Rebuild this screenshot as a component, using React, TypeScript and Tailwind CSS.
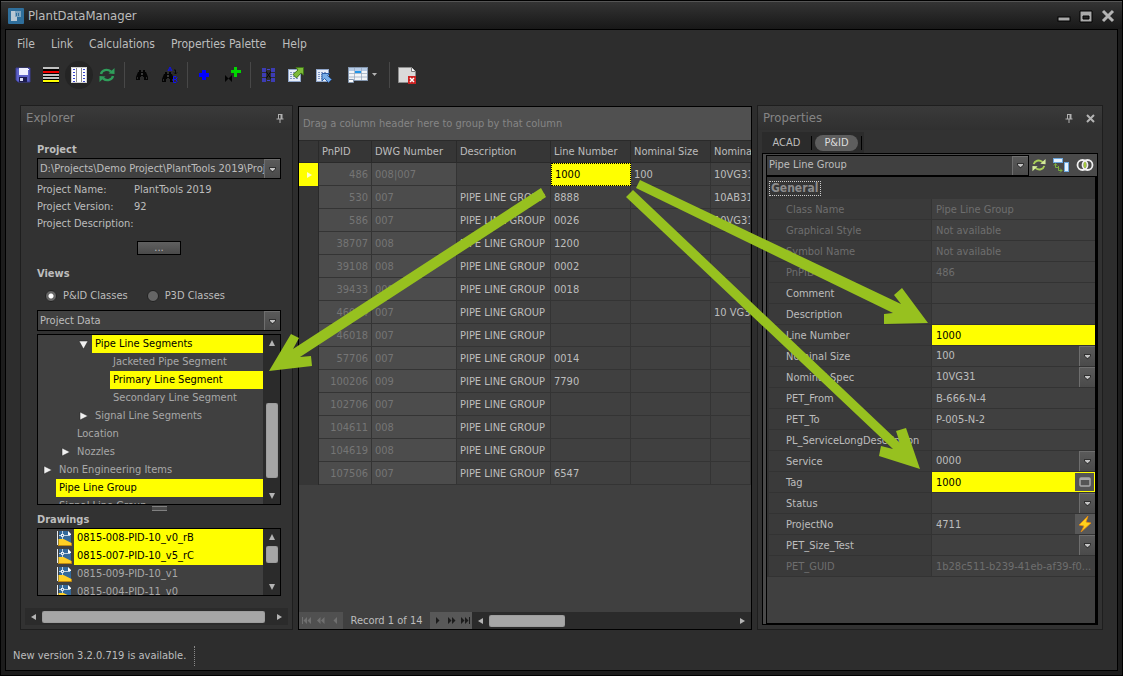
import { useState } from "react";
import type { ReactNode } from "react";

const treeItems = [
    { label: "Pipe Line Segments", level: 2, arrow: "open", selected: true },
    { label: "Jacketed Pipe Segment", level: 3 },
    { label: "Primary Line Segment", level: 3, selected: true },
    { label: "Secondary Line Segment", level: 3 },
    { label: "Signal Line Segments", level: 2, arrow: "closed" },
    { label: "Location", level: 1 },
    { label: "Nozzles", level: 1, arrow: "closed" },
    { label: "Non Engineering Items", level: 0, arrow: "closed" },
    { label: "Pipe Line Group", level: 0, selected: true },
    { label: "Signal Line Group", level: 0 },
];

const drawings = [
    { name: "0815-008-PID-10_v0_rB", selected: true },
    { name: "0815-007-PID-10_v5_rC", selected: true },
    { name: "0815-009-PID-10_v1" },
    { name: "0815-004-PID-11_v0" },
];

const levelPadding = ["pl-0", "pl-[18px]", "pl-[36px]", "pl-[54px]"];

// id, drawing, description, line number, nominal size, nominal spec
const records = [
    ["486", "008|007", "", "1000", "100", "10VG31"],
    ["530", "007", "PIPE LINE GROUP", "8888", "", "10AB31"],
    ["586", "007", "PIPE LINE GROUP", "0026", "", "10VG31"],
    ["38707", "008", "PIPE LINE GROUP", "1200", "", ""],
    ["39108", "008", "PIPE LINE GROUP", "0002", "", ""],
    ["39433", "008", "PIPE LINE GROUP", "0018", "", ""],
    ["46004", "007", "PIPE LINE GROUP", "", "", "10 VG31"],
    ["46018", "007", "PIPE LINE GROUP", "", "", ""],
    ["57706", "007", "PIPE LINE GROUP", "0014", "", ""],
    ["100206", "009", "PIPE LINE GROUP", "7790", "", ""],
    ["102706", "007", "PIPE LINE GROUP", "", "", ""],
    ["104611", "008", "PIPE LINE GROUP", "", "", ""],
    ["104619", "008", "PIPE LINE GROUP", "", "", ""],
    ["107506", "007", "PIPE LINE GROUP", "6547", "", ""],
];

type Property = {
    name: string;
    value: string;
    kind?: "readonly" | "select" | "window" | "bolt";
    marked?: boolean;
};

const properties: Property[] = [
    { name: "Class Name", value: "Pipe Line Group", kind: "readonly" },
    { name: "Graphical Style", value: "Not available", kind: "readonly" },
    { name: "Symbol Name", value: "Not available", kind: "readonly" },
    { name: "PnPID", value: "486", kind: "readonly" },
    { name: "Comment", value: "" },
    { name: "Description", value: "" },
    { name: "Line Number", value: "1000", marked: true },
    { name: "Nominal Size", value: "100", kind: "select" },
    { name: "Nominal Spec", value: "10VG31", kind: "select" },
    { name: "PET_From", value: "B-666-N-4" },
    { name: "PET_To", value: "P-005-N-2" },
    { name: "PL_ServiceLongDescription", value: "" },
    { name: "Service", value: "0000", kind: "select" },
    { name: "Tag", value: "1000", kind: "window", marked: true },
    { name: "Status", value: "", kind: "select" },
    { name: "ProjectNo", value: "4711", kind: "bolt" },
    { name: "PET_Size_Test", value: "", kind: "select" },
    { name: "PET_GUID", value: "1b28c511-b239-41eb-af39-f0...", kind: "readonly" },
];

function Icon({ w = 16, h = 16, children }: { w?: number; h?: number; children: ReactNode }) {
    return (
        <svg width={w} height={h} viewBox={`0 0 ${w} ${h}`} className="shrink-0" aria-hidden="true">
            {children}
        </svg>
    );
}

function Triangle({ dir, color = "#b4b4b4" }: { dir: "up" | "down" | "left" | "right"; color?: string }) {
    const points = {
        up: "1,7 4,1 7,7",
        down: "1,1 7,1 4,7",
        left: "6,1 6,7 1,4",
        right: "2,1 2,7 7,4",
    };
    return (
        <Icon w={8} h={8}>
            <polygon points={points[dir]} fill={color} />
        </Icon>
    );
}

function TreeArrow({ open }: { open: boolean }) {
    return (
        <Icon w={12} h={12}>
            <polygon
                points={open ? "2,3 11,3 6.5,11" : "3,2 11,6 3,10"}
                fill="#f0f0f0"
                stroke="#1e1e1e"
                strokeWidth="0.5"
            />
        </Icon>
    );
}

function PinIcon() {
    return (
        <Icon w={9} h={10}>
            <path d="M2.5 1v5M2 1.5h4M0.5 6h7M4 6v4" stroke="#b0b0b0" fill="none" />
            <path d="M5.5 1v5" stroke="#b0b0b0" strokeWidth="2" />
        </Icon>
    );
}

function DropMark() {
    return (
        <span className="pointer-events-none flex w-4 shrink-0 items-center justify-center border-l border-t border-[#6e6e6e] bg-linear-to-b from-[#5a5a5a] to-[#4a4a4a]">
            <svg width="9" height="7" viewBox="0 0 9 7" aria-hidden="true">
                <path d="M1 1h7v2L4.500 6.500 1 3z" fill="#303030" />
                <path d="M2 2h5v1L4.500 5.200 2 3z" fill="#c4c4c4" />
            </svg>
        </span>
    );
}

function ComboBox({ label, value, className = "" }: { label: string; value: string; className?: string }) {
    return (
        <div className={`flex h-[21px] border border-black bg-[#404040] ${className}`}>
            <select
                aria-label={label}
                className="min-w-0 flex-1 appearance-none overflow-hidden bg-transparent pl-0.5 text-[#bdbdbd] outline-none"
            >
                <option>{value}</option>
            </select>
            <DropMark />
        </div>
    );
}

function VerticalScroll({ thumb }: { thumb: string }) {
    return (
        <div className="relative flex w-[17px] shrink-0 flex-col items-center justify-between bg-[#2b2b2b] py-1">
            <Triangle dir="up" />
            <div className={`absolute w-3 rounded-xs bg-[#a6a6a6] shadow-[inset_0_0_1px_#555] ${thumb}`} />
            <Triangle dir="down" />
        </div>
    );
}

function ToolButton({ label, wide, active, children }: { label: string; wide?: boolean; active?: boolean; children: ReactNode }) {
    return (
        <button
            aria-label={label}
            title={label}
            className={`flex h-7 items-center justify-center gap-1 rounded-full hover:bg-[#242424] ${wide ? "w-12" : "w-7"} ${active ? "bg-[#242424]" : ""}`}
        >
            {children}
        </button>
    );
}

function Separator() {
    return <div className="mx-[3px] h-[26px] w-px bg-[#484848]" />;
}

function Binoculars() {
    return (
        <g fill="#040404">
            <path d="M4 3h2v2h2V3h2v2h1l2 5v3H9v-3H8V9H6v1H5v3H1v-3l2-5h1z" />
            <path d="M6.500 6.500h1v1h-1z" fill="#dddddd" />
            <path d="M2.500 10v2M11.500 10v2" stroke="#3c3c3c" strokeWidth="0.7" />
        </g>
    );
}

function SheetIcon() {
    return (
        <g>
            <rect x="0.5" y="2.500" width="12" height="12" fill="#e6edf8" stroke="#8ea4c8" />
            <path d="M2 5.500h9M2 7.500h9M2 9.500h9M2 11.500h9" stroke="#7f97c4" strokeDasharray="2 1" />
        </g>
    );
}

function Toolbar() {
    return (
        <div className="flex h-[34px] items-center pl-[3px]">
            <ToolButton label="Save">
                <Icon>
                    <path d="M1 1h14v14H3l-2-2z" fill="#5d62c8" stroke="#3c3f96" />
                    <rect x="4" y="1" width="9" height="7" fill="#eef0ff" />
                    <rect x="4" y="10" width="8" height="5" fill="#1c1c50" />
                    <rect x="5" y="11" width="3" height="3" fill="#d8daf2" />
                    <path d="M13.500 2v1" stroke="#fff" />
                </Icon>
            </ToolButton>
            <ToolButton label="Rows">
                <Icon>
                    <rect width="16" height="16" fill="#000" />
                    <path d="M0 1h16M0 8h16M0 11h16" stroke="#c0c0c0" strokeWidth="2" />
                    <path d="M0 5h16" stroke="#f00000" strokeWidth="2" />
                    <path d="M0 14h16" stroke="#ffff00" strokeWidth="2" />
                </Icon>
            </ToolButton>
            <ToolButton label="Columns" active>
                <Icon>
                    <rect x="0.5" y="0.5" width="15" height="15" fill="#fff" stroke="#d0d0d0" />
                    <path d="M5.500 1v14M10.500 1v14" stroke="#8c8c8c" />
                    <path d="M3 2v13M13 2v13" stroke="#3b46d0" strokeWidth="2" strokeDasharray="1 2" />
                </Icon>
            </ToolButton>
            <ToolButton label="Refresh">
                <Icon>
                    <path d="M2 7C3 3 8 1.500 12 4.500M14 9C13 13 8 14.500 4 11.500" fill="none" stroke="#2f9e5a" strokeWidth="2.400" />
                    <path d="M15.500 1v6l-6-.5zM.5 15V9l6 .5z" fill="#2f9e5a" />
                </Icon>
            </ToolButton>
            <Separator />
            <ToolButton label="Find">
                <Icon w={14}>
                    <Binoculars />
                </Icon>
            </ToolButton>
            <ToolButton label="Replace">
                <Icon w={18} h={18}>
                    <g transform="translate(0 3)">
                        <Binoculars />
                    </g>
                    <path d="M7 5l2-4 2 4M8 4h2" stroke="#1010f0" fill="none" />
                    <path d="M13 4h1.500v4M13 6.500l1.500 1.500L16 6.500" stroke="#080808" fill="none" />
                    <path d="M12.500 10.500h2.500l1 1-1 2h-2.500h2.500l1 2-1 1h-2.500z" stroke="#1010f0" fill="none" />
                </Icon>
            </ToolButton>
            <Separator />
            <ToolButton label="Add">
                <Icon>
                    <path d="M5 3h4v3h3v4H9v3H5v-3H2V6h3z" fill="#0000ff" />
                </Icon>
            </ToolButton>
            <ToolButton label="Add valve">
                <Icon>
                    <path d="M0 8l7 7V8l-7 7z" fill="#040404" />
                    <path d="M9 0h3v3h4v3h-4v4H9V6H6V3h3z" fill="#00d800" />
                </Icon>
            </ToolButton>
            <Separator />
            <ToolButton label="Matrix">
                <Icon w={13} h={14}>
                    <path d="M3 2l7 10M10 2L3 12" stroke="#080808" />
                    <path d="M0 0h4v4H0zM0 5h4v4H0zM0 10h4v4H0zM9 0h4v4H9zM9 5h4v4H9zM9 10h4v4H9z" fill="#3c3cb4" />
                    <path d="M5 1h3v1H5zM5 12h3v1H5z" fill="#4646c8" />
                </Icon>
            </ToolButton>
            <ToolButton label="Export">
                <Icon>
                    <SheetIcon />
                    <path d="M8 0.500h7.500V8l-2.500-2-4.500 5L5 7.500 10 3z" fill="#7dbb3a" stroke="#3f7418" />
                </Icon>
            </ToolButton>
            <ToolButton label="Import">
                <Icon>
                    <SheetIcon />
                    <path d="M6 6.500h7.500l-2 2 4 4-3 3-4-4-2.500 2.500z" fill="#78aee8" stroke="#2c5ea6" />
                </Icon>
            </ToolButton>
            <ToolButton label="Layout" wide>
                <Icon w={20}>
                    <rect x="0.5" y="0.5" width="19" height="13" fill="#f2f5f8" stroke="#8396ae" />
                    <path d="M1 2.500h18" stroke="#b6cbe6" strokeWidth="3" />
                    <path d="M6.500 1v12M13.500 1v12M1 6.500h18M1 10h18" stroke="#93a5ba" strokeWidth="0.7" />
                    <path d="M7 5h6" stroke="#2196e8" strokeWidth="2" />
                    <path d="M0.500 12.500h5v3h-5z" fill="#fff" stroke="#8396ae" />
                </Icon>
                <Icon w={5} h={4}>
                    <path d="M0 0h5L2.500 3z" fill="#b4b4b4" />
                </Icon>
            </ToolButton>
            <Separator />
            <ToolButton label="Close document">
                <Icon w={18} h={17}>
                    <path d="M0.500 0.500h13l4 4v11h-17z" fill="#dadada" stroke="#8c8c8c" />
                    <path d="M13.500 0.500v4h4" fill="#fff" stroke="#777" />
                    <rect x="10" y="9" width="8" height="8" fill="#cc2222" />
                    <path d="M12 11l4 4M16 11l-4 4" stroke="#fff" strokeWidth="1.500" />
                </Icon>
            </ToolButton>
        </div>
    );
}

function DrawingIcon() {
    return (
        <Icon w={16}>
            <path d="M0.500 1v14" stroke="#e8eef4" />
            <path d="M2 1h9l3 3v11H2z" fill="#34699a" />
            <path d="M11 1l3 3v1h-3z" fill="#ffffff" />
            <path d="M2 5.500h11M5.500 1v8" stroke="#e4edf5" strokeWidth="0.8" />
            <rect x="4.500" y="4.500" width="2" height="2" fill="#34699a" stroke="#ffffff" strokeWidth="0.8" />
            <path d="M1.500 9h5l8 4v2.500h-13z" fill="#ffcf24" />
            <path d="M1 15.500h13.500V13" stroke="#c08a10" fill="none" />
        </Icon>
    );
}

function PanelHeader({ title, children }: { title: string; children: ReactNode }) {
    return (
        <div className="flex h-6 shrink-0 items-center gap-3 bg-linear-to-b from-[#3a3a3a] to-[#303030] pl-[5px] pr-[7px]">
            <h2 className="flex-1 text-[13px] text-[#858585]">{title}</h2>
            {children}
        </div>
    );
}

function Explorer() {
    const [view, setView] = useState("pid");
    const info = [
        ["Project Name:", "PlantTools 2019"],
        ["Project Version:", "92"],
        ["Project Description:", ""],
    ];

    return (
        <section className="flex w-[273px] shrink-0 flex-col border border-[#1e1e1e] bg-[#323232]">
            <PanelHeader title="Explorer">
                <button aria-label="Pin explorer">
                    <PinIcon />
                </button>
            </PanelHeader>

            <div className="flex min-h-0 flex-1 flex-col pl-4 pr-[11px] pt-3">
                <h3 className="font-bold leading-4">Project</h3>
                <ComboBox label="Project" value="D:\Projects\Demo Project\PlantTools 2019\Project.xml" />
                <dl className="mt-0.5">
                    {info.map(([name, value]) => (
                        <div key={name} className="flex leading-[17px]">
                            <dt className="w-[97px] whitespace-nowrap">{name}</dt>
                            <dd>{value}</dd>
                        </div>
                    ))}
                </dl>
                <button className="mt-[9px] h-[14px] w-11 self-center border border-black bg-linear-to-b from-[#606060] to-[#4a4a4a] leading-[10px]">
                    ...
                </button>

                <h3 className="mt-[11px] font-bold leading-4">Views</h3>
                <div className="flex h-7 items-center gap-[19px] pl-2">
                    {[["pid", "P&ID Classes"], ["p3d", "P3D Classes"]].map(([id, text]) => (
                        <label key={id} className="flex items-center gap-1.5">
                            <input
                                type="radio"
                                name="view"
                                checked={view === id}
                                onChange={() => setView(id)}
                                className="h-3 w-3 appearance-none rounded-full border border-[#222222] bg-[#666666] checked:bg-[radial-gradient(circle,#ffffff_0_2px,#666666_3px)]"
                            />
                            {text}
                        </label>
                    ))}
                </div>
                <ComboBox label="View data" value="Project Data" />

                <div className="mt-[3px] flex min-h-0 flex-1 basis-0 border border-black bg-[#404040]">
                    <ul className="flex-1 overflow-hidden">
                        {treeItems.map((item) => (
                            <li key={item.label} className={`flex h-[18px] items-center ${levelPadding[item.level]}`}>
                                <span className="flex w-[18px] shrink-0 justify-center">
                                    {item.arrow && <TreeArrow open={item.arrow === "open"} />}
                                </span>
                                <span
                                    className={`flex-1 whitespace-nowrap pl-[3px] leading-[18px] ${item.selected ? "bg-[#ffff00] text-black" : "text-[#a8a8a8]"}`}
                                >
                                    {item.label}
                                </span>
                            </li>
                        ))}
                    </ul>
                    <VerticalScroll thumb="top-[68px] h-[75px]" />
                </div>
                <div className="flex h-[7px] items-center justify-center">
                    <div className="h-[5px] w-[15px] border-y border-[#808080] bg-[#4c4c4c]" />
                </div>

                <h3 className="font-bold leading-4">Drawings</h3>
                <div className="flex h-[68px] shrink-0 border border-black bg-[#404040]">
                    <ul className="flex-1 overflow-hidden">
                        {drawings.map((drawing) => (
                            <li key={drawing.name} className="flex h-[18px] items-center gap-px pl-[19px]">
                                <DrawingIcon />
                                <span
                                    className={`flex-1 whitespace-nowrap pl-[3px] leading-[18px] ${drawing.selected ? "bg-[#ffff00] text-black" : "text-[#a8a8a8]"}`}
                                >
                                    {drawing.name}
                                </span>
                            </li>
                        ))}
                    </ul>
                    <VerticalScroll thumb="top-[17px] h-[17px]" />
                </div>
            </div>

            <div className="mx-1 mb-1 mt-3 flex h-[17px] shrink-0 items-center gap-1 bg-[#2b2b2b] px-[5px]">
                <Triangle dir="left" />
                <div className="h-3 flex-1 rounded-xs bg-[#a6a6a6] shadow-[inset_0_0_1px_#555]" />
                <span className="pl-1.5">
                    <Triangle dir="right" />
                </span>
            </div>
        </section>
    );
}

function NavMark({ kind, color }: { kind: "first" | "prevPage" | "prev" | "next" | "nextPage" | "last"; color: string }) {
    const paths = {
        first: "M0 1h1v7H0zM5 1v7L1.500 4.500zM9 1v7L5.500 4.500z",
        prevPage: "M4.500 1v7L1 4.500zM8.500 1v7L5 4.500z",
        prev: "M6 1v7L2.500 4.500z",
        next: "M3 1v7L6.500 4.500z",
        nextPage: "M1 1v7L4.500 4.500zM5 1v7L8.500 4.500z",
        last: "M0 1v7L3.500 4.500zM4 1v7L7.500 4.500zM8 1h1v7H8z",
    };
    return (
        <Icon w={9} h={9}>
            <path d={paths[kind]} fill={color} />
        </Icon>
    );
}

function RecordGrid() {
    const cell = "overflow-hidden whitespace-nowrap border-b border-r border-[#343434] px-[3px] pt-px";

    return (
        <section className="mt-px flex min-w-0 flex-1 flex-col border border-black bg-[#404040]">
            <div className="flex h-[33px] shrink-0 items-center bg-[#505050] pl-1 pt-px text-[#858585]">
                Drag a column header here to group by that column
            </div>
            <div className="min-h-0 flex-1 overflow-hidden">
                <table className="w-full table-fixed border-separate border-spacing-0">
                    <colgroup>
                        <col className="w-5" />
                        <col className="w-[53px]" />
                        <col className="w-[85px]" />
                        <col className="w-[94px]" />
                        <col className="w-[80px]" />
                        <col className="w-[80px]" />
                        <col />
                    </colgroup>
                    <thead>
                        <tr className="h-[23px] bg-[#363636]">
                            {["", "PnPID", "DWG Number", "Description", "Line Number", "Nominal Size", "Nominal"].map((title) => (
                                <th key={title} className="whitespace-nowrap border-b border-r border-t border-[#2a2a2a] pl-[3px] text-left font-normal last:border-r-0">
                                    {title}
                                </th>
                            ))}
                        </tr>
                    </thead>
                    <tbody>
                        {records.map(([id, dwg, description, line, size, spec], index) => (
                            <tr key={id} className="h-[23px]">
                                <td className={`border-r border-[#2a2a2a] ${index === 0 ? "bg-[#ffff00]" : "bg-[#363636]"}`}>
                                    {index === 0 && (
                                        <span className="flex justify-center">
                                            <Triangle dir="right" color="#fdfdd0" />
                                        </span>
                                    )}
                                </td>
                                <td className={`${cell} bg-[#4c4c4c] text-right text-[#757575]`}>{id}</td>
                                <td className={`${cell} bg-[#4c4c4c] text-[#757575]`}>{dwg}</td>
                                <td className={cell}>{description}</td>
                                <td
                                    className={
                                        index === 0
                                            ? "border border-dotted border-black bg-[#ffff00] px-[3px] text-black"
                                            : cell
                                    }
                                >
                                    {line}
                                </td>
                                <td className={cell}>{size}</td>
                                <td className={cell}>{spec}</td>
                            </tr>
                        ))}
                    </tbody>
                </table>
            </div>
            <div className="flex h-[17px] shrink-0 bg-[#2b2b2b]">
                <div className="flex w-11 items-center justify-around bg-[#505050]">
                    <button disabled aria-label="First record"><NavMark kind="first" color="#707070" /></button>
                    <button disabled aria-label="Previous page"><NavMark kind="prevPage" color="#707070" /></button>
                    <button disabled aria-label="Previous record"><NavMark kind="prev" color="#707070" /></button>
                </div>
                <div className="flex w-[87px] items-center justify-center bg-[#404040]">Record 1 of 14</div>
                <div className="flex w-[42px] items-center justify-around bg-[#585858]">
                    <button aria-label="Next record"><NavMark kind="next" color="#1c1c1c" /></button>
                    <button aria-label="Next page"><NavMark kind="nextPage" color="#1c1c1c" /></button>
                    <button aria-label="Last record"><NavMark kind="last" color="#1c1c1c" /></button>
                </div>
                <div className="flex flex-1 items-center gap-1 px-[5px]">
                    <Triangle dir="left" />
                    <div className="h-3 w-[76px] rounded-xs bg-[#a6a6a6] shadow-[inset_0_0_1px_#555]" />
                    <div className="flex-1" />
                    <Triangle dir="right" />
                </div>
            </div>
        </section>
    );
}

function PropertyRow({ property }: { property: Property }) {
    const { name, value, kind, marked } = property;
    const readonly = kind === "readonly";
    const id = `property-${name}`;
    const field = "h-5 w-full min-w-0 flex-1 appearance-none bg-transparent pl-1 outline-none";

    return (
        <tr className={`h-[21px] ${readonly ? "text-[#6e6e6e]" : "text-[#bdbdbd]"}`}>
            <th scope="row" className="whitespace-nowrap border-b border-r border-[#333333] bg-[#3a3a3a] pl-[17px] pt-px text-left font-normal">
                <label htmlFor={id}>{name}</label>
            </th>
            <td className={`border-b border-[#333333] ${marked ? "bg-[#ffff00] text-black" : ""}`}>
                <div className="flex h-5">
                    {kind === "select" ? (
                        <select id={id} className={field}>
                            <option>{value}</option>
                        </select>
                    ) : (
                        <input id={id} defaultValue={value} disabled={readonly} className={field} />
                    )}
                    {kind === "select" && <DropMark />}
                    {kind === "window" && (
                        <button aria-label="Edit tag" className="m-px flex w-[19px] items-center justify-center bg-[#555555]">
                            <Icon w={12} h={10}>
                                <rect x="1" y="1" width="10" height="8" rx="1" fill="#555" stroke="#a8a8a8" strokeWidth="1.500" />
                                <path d="M1 2h10" stroke="#a8a8a8" strokeWidth="2" />
                            </Icon>
                        </button>
                    )}
                    {kind === "bolt" && (
                        <button aria-label="Evaluate" className="flex w-5 items-center justify-center bg-[#585858]">
                            <Icon w={14}>
                                <path d="M10 0L1 9l5 1-3 6 10-9-5-1z" fill="#ffd21c" stroke="#e88a10" strokeWidth="0.8" />
                            </Icon>
                        </button>
                    )}
                </div>
            </td>
        </tr>
    );
}

function Properties() {
    const [tab, setTab] = useState("P&ID");

    return (
        <section className="flex w-[346px] shrink-0 flex-col border border-[#1e1e1e] bg-[#323232]">
            <PanelHeader title="Properties">
                <button aria-label="Pin properties">
                    <PinIcon />
                </button>
                <button aria-label="Close properties">
                    <Icon w={9} h={9}>
                        <path d="M1 1l7 7M8 1L1 8" stroke="#b4b4b4" strokeWidth="2" />
                    </Icon>
                </button>
            </PanelHeader>

            <div className="ml-1 mt-0.5 flex h-[21px] w-[102px] shrink-0 items-center bg-[#2b2b2b]">
                {["ACAD", "P&ID"].map((name) => (
                    <div key={name} className="flex h-3.5 items-center border-r border-black px-[3px]">
                        <button
                            onClick={() => setTab(name)}
                            className={`h-4 w-[43px] rounded-full leading-4 ${tab === name ? "bg-[#5e5e5e] text-[#dddddd]" : ""}`}
                        >
                            {name}
                        </button>
                    </div>
                ))}
            </div>

            <div className="mx-1 mb-1 flex min-h-0 flex-1 flex-col border border-black bg-[#4a4a4a] pl-[3px]">
                <div className="flex h-[22px] shrink-0 items-center">
                    <ComboBox label="Class" value="Pipe Line Group" className="h-5 flex-1" />
                    <div className="flex w-[68px] items-center justify-around">
                        <button aria-label="Refresh properties">
                            <Icon w={14} h={16}>
                                <svg width="14" height="14" y="1" viewBox="0 0 16 16">
                                    <path d="M2 7C3 3 8 1.500 12 4.500M14 9C13 13 8 14.500 4 11.500" fill="none" stroke="#a9cf58" strokeWidth="2.200" />
                                    <path d="M15.500 1v6l-6-.5zM.5 15V9l6 .5z" fill="#d5eb9c" />
                                </svg>
                            </Icon>
                        </button>
                        <button aria-label="Arrange">
                            <Icon>
                                <rect x="0.500" y="1.500" width="9" height="4" fill="#e6f3ff" stroke="#6ca8e0" />
                                <rect x="11.500" y="5.500" width="4" height="9" fill="#e6f3ff" stroke="#6ca8e0" />
                                <path d="M2.500 7v3.500H6M1 8.500l1.500-2L4 8.500M5.500 9v4.500H9M7 11.500l2 2-2 2" stroke="#7cb03c" fill="none" />
                            </Icon>
                        </button>
                        <button aria-label="Compare">
                            <Icon w={18}>
                                <path d="M9 4a6 6 0 0 1 0 8 6 6 0 0 1 0-8" fill="#a4c83c" />
                                <circle cx="6.500" cy="8" r="5" fill="none" stroke="#f0f0f0" strokeWidth="1.800" />
                                <circle cx="11.500" cy="8" r="5" fill="none" stroke="#f0f0f0" strokeWidth="1.800" />
                            </Icon>
                        </button>
                    </div>
                </div>
                <div className="min-h-0 flex-1 overflow-hidden border border-r-2 border-black bg-[#404040]">
                    <h3 className="flex h-[22px] items-center bg-[#363636] pl-0.5 font-bold text-[#8c8c8c]">
                        <span className="border border-dotted border-[#cccccc] px-px text-[12px] leading-[13px]">General</span>
                    </h3>
                    <table className="w-full table-fixed border-separate border-spacing-0 border-l-2 border-[#333333]">
                        <colgroup>
                            <col className="w-[163px]" />
                            <col />
                        </colgroup>
                        <tbody>
                            {properties.map((property) => (
                                <PropertyRow key={property.name} property={property} />
                            ))}
                        </tbody>
                    </table>
                </div>
            </div>
        </section>
    );
}

function LinkArrows() {
    return (
        <svg
            width="1123"
            height="676"
            viewBox="0 0 1123 676"
            className="pointer-events-none absolute left-0 top-0"
            fill="#97c11f"
            aria-hidden="true"
        >
            <polygon points="541,188 546,197 300,357 311,356 312,366 269,371 291,334 299,338 293,349" />
            <polygon points="640,180 636,188 893,313 884,314 884,324 928,323 902,288 894,295 901,304" />
            <polygon points="633,190 626,197 893,449 881,446 879,456 920,469 906,428 896,431 900,443" />
        </svg>
    );
}

export default function App() {
    return (
        <div className="relative flex h-screen flex-col overflow-hidden bg-[#1c1c1c] p-px font-['DejaVu_Sans_Condensed','DejaVu_Sans',sans-serif] text-[11px] leading-[14px] text-[#bdbdbd] shadow-[inset_0_0_0_1px_#000]">
            <header className="flex h-7 shrink-0 items-center gap-1 border-t border-[#555555] bg-linear-to-b from-[#343434] to-[#181818] pl-[7px] pr-[7px]">
                <Icon>
                    <rect width="16" height="16" rx="1" fill="#2f6f9c" />
                    <path d="M3 3h6v10H3z" fill="#b9c8d4" />
                    <path d="M7 3h6v6H7z" fill="#7ea3bf" />
                    <path d="M8 5h1v3H8zM10 5h1v3h-1z" fill="#2f6f9c" />
                </Icon>
                <h1 className="flex-1 text-[13px] leading-5 text-[#bcbcbc]">PlantDataManager</h1>
                <div className="flex items-center gap-2">
                    <button aria-label="Minimize">
                        <Icon w={14} h={14}>
                            <rect x="1" y="8" width="12" height="4" fill="#aaa" stroke="#000" />
                        </Icon>
                    </button>
                    <button aria-label="Maximize">
                        <Icon w={14} h={14}>
                            <path d="M1 2h12v11H1zM4 7v3h6V7z" fill="#aaa" fillRule="evenodd" stroke="#000" />
                        </Icon>
                    </button>
                    <button aria-label="Close">
                        <Icon w={14} h={14}>
                            <path d="M2 2l10 10M12 2L2 12" stroke="#b4b4b4" strokeWidth="3" />
                        </Icon>
                    </button>
                </div>
            </header>

            <div className="mx-1 mb-1 flex min-h-0 flex-1 flex-col border border-black bg-[#2d2d2d]">
                <nav className="flex h-7 shrink-0 items-center gap-4 pl-[11px] text-[12px]">
                    {["File", "Link", "Calculations", "Properties Palette", "Help"].map((item) => (
                        <button key={item}>{item}</button>
                    ))}
                </nav>
                <Toolbar />
                <main className="flex min-h-0 flex-1 gap-[5px] px-[14px] pt-[13px]">
                    <Explorer />
                    <RecordGrid />
                    <Properties />
                </main>
                <footer className="flex h-10 shrink-0 items-center pl-[7px] pt-3">
                    <span className="border-r border-dotted border-[#8a8a8a] pr-2 leading-5">New version 3.2.0.719 is available.</span>
                </footer>
            </div>
            <LinkArrows />
        </div>
    );
}
